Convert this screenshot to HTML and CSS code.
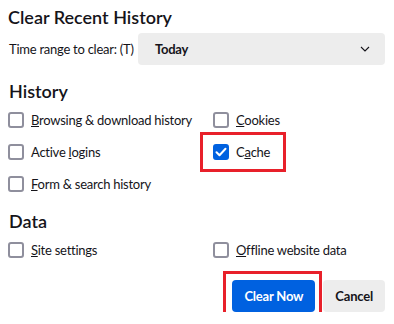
FILE: index.html
```html
<!DOCTYPE html>
<html lang="en">
<head>
    <meta charset="UTF-8">
    <title>Clear Recent History</title>
    <link rel="stylesheet" href="styles.css">
</head>
<body>

<div class="dialog">
    <h1 class="title">Clear Recent History</h1>

    <div class="range-row">
        <span class="range-label">Time range to clear: (T)</span>
        <div class="select">
            <span>Today</span>
            <svg class="chevron" width="10" height="6" viewBox="0 0 10 6"><path d="M1 1l4 4 4-4" fill="none" stroke="#15141a" stroke-width="1.1"/></svg>
        </div>
    </div>

    <h2 class="section">History</h2>
    <div class="options">
        <label class="option"><span class="box"></span><span><u>B</u>rowsing &amp; download history</span></label>
        <label class="option"><span class="box"></span><span><u>C</u>ookies</span></label>
        <label class="option"><span class="box"></span><span>Active <u>l</u>ogins</span></label>
        <label class="option highlight"><span class="box checked"><svg width="12" height="10" viewBox="0 0 12 10"><path d="M1.5 5.2l3 3 6-6.4" fill="none" stroke="#fff" stroke-width="2" stroke-linecap="round" stroke-linejoin="round"/></svg></span><span>C<u>a</u>che</span></label>
        <label class="option"><span class="box"></span><span><u>F</u>orm &amp; search history</span></label>
    </div>

    <h2 class="section data">Data</h2>
    <div class="options">
        <label class="option"><span class="box"></span><span><u>S</u>ite settings</span></label>
        <label class="option"><span class="box"></span><span><u>O</u>ffline website data</span></label>
    </div>

    <div class="actions">
        <button class="btn primary">Clear Now</button>
        <button class="btn">Cancel</button>
    </div>
</div>

</body>
</html>
```

FILE: styles.css
```css
body {
    margin: 0;
    background: #ffffff;
    color: #15141a;
    font-family: Lato, sans-serif;
    font-size: 13px;
    letter-spacing: -0.25px;
}
.dialog {
    padding: 4px 9px 0 8px;
}
.title {
    margin: 0;
    font-size: 18px;
    font-weight: 600;
    line-height: 26px;
    letter-spacing: 0;
}
.range-row {
    display: flex;
    align-items: center;
    margin-top: 3px;
}
.range-label {
    white-space: nowrap;
    padding-left: 1px;
}
.select {
    width: 247px;
    margin-left: auto;
    box-sizing: border-box;
    height: 32px;
    background: #ededed;
    border-radius: 4px;
    display: flex;
    align-items: center;
    justify-content: space-between;
    padding: 0 15px 0 17px;
    font-weight: 700;
}
.section {
    margin: 13px 0 0 1px;
    font-size: 18px;
    font-weight: 600;
    line-height: 26px;
    letter-spacing: 0;
}
.section.data {
    margin-top: 8px;
}
.options {
    display: grid;
    grid-template-columns: 205px 1fr;
    grid-auto-rows: 32px;
}
.option {
    display: flex;
    align-items: center;
    gap: 7px;
    justify-self: start;
    position: relative;
}
.box {
    width: 16px;
    height: 16px;
    box-sizing: border-box;
    border: 2px solid #8f8f9d;
    border-radius: 3px;
    display: flex;
    align-items: center;
    justify-content: center;
}
.box.checked {
    background: #0061e0;
    border-color: #0061e0;
}
.highlight::after {
    content: "";
    position: absolute;
    top: -4px;
    bottom: -4px;
    left: -13px;
    right: -16px;
    border: 3px solid #e8202a;
}
.actions {
    display: flex;
    justify-content: flex-end;
    gap: 8px;
    margin-top: 14px;
}
.btn {
    height: 32px;
    border: none;
    border-radius: 4px;
    background: #ededed;
    color: #15141a;
    font-family: inherit;
    font-size: 13px;
    font-weight: 700;
    letter-spacing: -0.2px;
    padding: 0 12px;
}
.btn.primary {
    background: #0061e0;
    color: #ffffff;
    position: relative;
}
.btn.primary::after {
    content: "";
    position: absolute;
    top: -9px;
    bottom: -8px;
    left: -9px;
    right: -7px;
    border: 3px solid #e8202a;
}
```
